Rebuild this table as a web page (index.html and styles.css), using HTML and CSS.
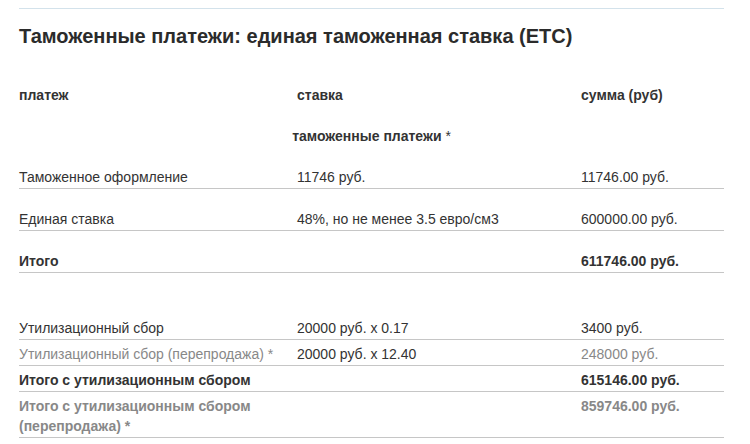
FILE: index.html
```html
<!DOCTYPE html>
<html lang="ru">
<head>
<meta charset="utf-8">
<title>Таможенные платежи</title>
<link rel="stylesheet" href="styles.css">
</head>
<body>
<div class="wrap">
  <h2 class="title">Таможенные платежи: единая таможенная ставка (ЕТС)</h2>
  <table class="calc">
    <colgroup>
      <col class="c1"><col class="c2"><col class="c3">
    </colgroup>
    <thead>
      <tr class="head">
        <th>платеж</th><th>ставка</th><th>сумма (руб)</th>
      </tr>
      <tr class="head">
        <th colspan="3" class="center">таможенные платежи <span class="star">*</span></th>
      </tr>
    </thead>
    <tbody>
      <tr class="big">
        <td>Таможенное оформление</td><td>11746 руб.</td><td>11746.00 руб.</td>
      </tr>
      <tr class="big">
        <td>Единая ставка</td><td>48%, но не менее 3.5 евро/см3</td><td>600000.00 руб.</td>
      </tr>
      <tr class="big bold">
        <td>Итого</td><td></td><td>611746.00 руб.</td>
      </tr>
      <tr class="spacer"><td colspan="3"></td></tr>
      <tr>
        <td>Утилизационный сбор</td><td>20000 руб. x 0.17</td><td>3400 руб.</td>
      </tr>
      <tr>
        <td class="muted">Утилизационный сбор (перепродажа) *</td><td>20000 руб. x 12.40</td><td class="muted">248000 руб.</td>
      </tr>
      <tr class="bold">
        <td>Итого с утилизационным сбором</td><td></td><td>615146.00 руб.</td>
      </tr>
      <tr class="bold">
        <td class="muted">Итого с утилизационным сбором (перепродажа) *</td><td></td><td class="muted">859746.00 руб.</td>
      </tr>
    </tbody>
  </table>
</div>
</body>
</html>
```

FILE: styles.css
```css
html, body {
  margin: 0;
  padding: 0;
  background: #fff;
}

body {
  font-family: "Liberation Sans", Arial, sans-serif;
  color: #333;
  font-size: 14px;
}

.wrap {
  margin: 8px 26px 0 19px;
  border-top: 1px solid #d3e2eb;
}

.title {
  margin: 15px 0 0 0;
  font-size: 20px;
  line-height: 24px;
  font-weight: bold;
  color: #2b2b2b;
}

.calc {
  width: 100%;
  margin-top: 17px;
  border-collapse: collapse;
  table-layout: fixed;
}

.c1 { width: 278px; }
.c2 { width: 284px; }

.calc th,
.calc td {
  text-align: left;
  vertical-align: top;
  padding: 4px 0 1px 0;
  line-height: 20px;
  font-size: 14px;
}

.calc th {
  font-weight: bold;
  color: #333;
  padding-top: 20px;
}

.calc th.center {
  text-align: center;
}

.star {
  font-weight: normal;
}

.calc tbody tr {
  border-bottom: 1px solid #c6c6c6;
}

.calc tr.big td {
  padding-top: 20px;
}

.calc tr.spacer {
  border-bottom: none;
}

.calc tr.spacer td {
  padding: 0;
  height: 41px;
}

.calc tr.bold td {
  font-weight: bold;
}

.calc td.muted {
  color: #888;
}
```
